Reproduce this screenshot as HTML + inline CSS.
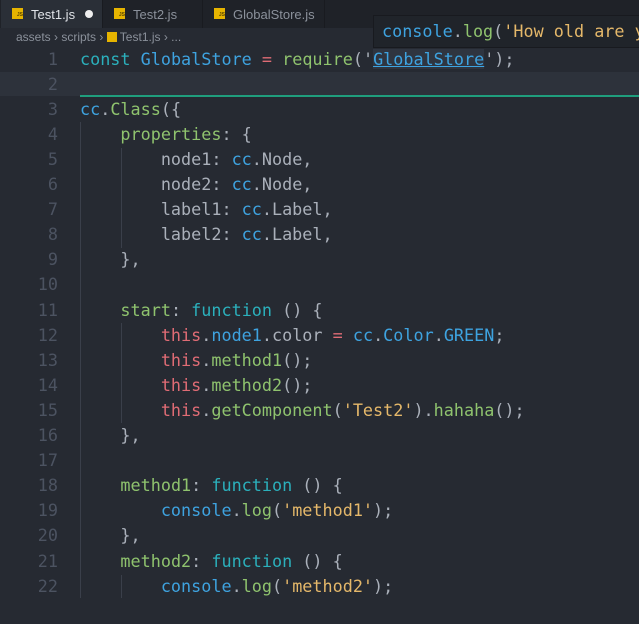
<!DOCTYPE html>
<html><head><style>
body{margin:0;width:639px;height:598px;overflow:hidden;background:#262a32;font-family:"Liberation Sans",sans-serif;position:relative}
.tabs{position:absolute;top:0;left:0;width:639px;height:28px;background:#1f2228}
.tab{position:absolute;top:0;height:28px;color:#8b919b;font-size:13px;line-height:29px}
.tab .ic{position:absolute;left:11px;top:8px;width:11px;height:11px;background:#e6b400;color:#5a4500;font-size:5px;line-height:14px;text-align:right;font-weight:bold}
.tab span.t{position:absolute;left:30px}
.bc{position:absolute;top:28px;left:16px;height:18px;line-height:19px;color:#8b919b;font-size:12px}
.code{position:absolute;top:46.5px;left:0;font-family:"DejaVu Sans Mono","Liberation Mono",monospace;font-size:16.8px;line-height:25.1px;color:#aab0ba;white-space:pre}
.ln{position:absolute;left:0;width:58px;text-align:right;color:#4c5361}
.tx{position:absolute;left:80px}
.k{color:#2bb0bc}.b{color:#3ea3e0}.r{color:#e06c75}.g{color:#8fc36e}.s{color:#e5b86a}
.guide{position:absolute;width:1px;background:#3a3f4a}
</style></head><body>
<div class="tabs">
<div class="tab" style="left:1px;width:101px;background:#2a2f37;color:#e0e3e8"><div class="ic">JS</div><span class="t">Test1.js</span><span style="position:absolute;left:84px;top:10px;width:8px;height:8px;border-radius:50%;background:#eee"></span></div>
<div class="tab" style="left:102px;width:100px;border-left:1px solid #191b20"><div class="ic">JS</div><span class="t">Test2.js</span></div>
<div class="tab" style="left:202px;width:121px;border-left:1px solid #191b20;border-right:1px solid #191b20"><div class="ic">JS</div><span class="t">GlobalStore.js</span></div>
</div>
<div class="bc">assets › scripts › <span style="display:inline-block;width:10px;height:10px;background:#e6b400;vertical-align:-1px"></span> Test1.js › ...</div>
<div style="position:absolute;top:72px;left:0;width:639px;height:24px;background:#2d323b"></div>
<div style="position:absolute;top:95px;left:80px;width:559px;height:2px;background:#1f9e7d"></div>
<div class="guide" style="left:80px;top:122px;height:476px"></div>
<div class="guide" style="left:121px;top:148px;height:100px"></div>
<div class="guide" style="left:121px;top:323px;height:100px"></div>
<div class="guide" style="left:121px;top:575px;height:23px"></div>
<div class="code">
<div class="ln" style="top:0">1</div><div class="tx" style="top:0"><span class="k">const</span> <span class="b">GlobalStore</span> <span class="r">=</span> <span class="g">require</span>('<span class="b" style="text-decoration:underline;background:#2f3540">GlobalStore</span>');</div>
<div class="ln" style="top:25.1px">2</div>
<div class="ln" style="top:50.2px">3</div><div class="tx" style="top:50.2px"><span class="b">cc</span>.<span class="g">Class</span>({</div>
<div class="ln" style="top:75.3px">4</div><div class="tx" style="top:75.3px">    <span class="g">properties</span>: {</div>
<div class="ln" style="top:100.4px">5</div><div class="tx" style="top:100.4px">        node1: <span class="b">cc</span>.Node,</div>
<div class="ln" style="top:125.5px">6</div><div class="tx" style="top:125.5px">        node2: <span class="b">cc</span>.Node,</div>
<div class="ln" style="top:150.6px">7</div><div class="tx" style="top:150.6px">        label1: <span class="b">cc</span>.Label,</div>
<div class="ln" style="top:175.7px">8</div><div class="tx" style="top:175.7px">        label2: <span class="b">cc</span>.Label,</div>
<div class="ln" style="top:200.8px">9</div><div class="tx" style="top:200.8px">    },</div>
<div class="ln" style="top:225.9px">10</div>
<div class="ln" style="top:251px">11</div><div class="tx" style="top:251px">    <span class="g">start</span>: <span class="k">function</span> () {</div>
<div class="ln" style="top:276.1px">12</div><div class="tx" style="top:276.1px">        <span class="r">this</span>.<span class="b">node1</span>.color <span class="r">=</span> <span class="b">cc</span>.<span class="b">Color</span>.<span class="b">GREEN</span>;</div>
<div class="ln" style="top:301.2px">13</div><div class="tx" style="top:301.2px">        <span class="r">this</span>.<span class="g">method1</span>();</div>
<div class="ln" style="top:326.3px">14</div><div class="tx" style="top:326.3px">        <span class="r">this</span>.<span class="g">method2</span>();</div>
<div class="ln" style="top:351.4px">15</div><div class="tx" style="top:351.4px">        <span class="r">this</span>.<span class="g">getComponent</span>(<span class="s">'Test2'</span>).<span class="g">hahaha</span>();</div>
<div class="ln" style="top:376.5px">16</div><div class="tx" style="top:376.5px">    },</div>
<div class="ln" style="top:401.6px">17</div>
<div class="ln" style="top:426.7px">18</div><div class="tx" style="top:426.7px">    <span class="g">method1</span>: <span class="k">function</span> () {</div>
<div class="ln" style="top:451.8px">19</div><div class="tx" style="top:451.8px">        <span class="b">console</span>.<span class="g">log</span>(<span class="s">'method1'</span>);</div>
<div class="ln" style="top:476.9px">20</div><div class="tx" style="top:476.9px">    },</div>
<div class="ln" style="top:502px">21</div><div class="tx" style="top:502px">    <span class="g">method2</span>: <span class="k">function</span> () {</div>
<div class="ln" style="top:527.1px">22</div><div class="tx" style="top:527.1px">        <span class="b">console</span>.<span class="g">log</span>(<span class="s">'method2'</span>);</div>
</div>
<div style="position:absolute;left:373px;top:15px;width:270px;height:31px;background:#20242a;border:1px solid #181a1f;font-family:'DejaVu Sans Mono',monospace;font-size:16.8px;line-height:31px;color:#aab0ba;white-space:pre;overflow:hidden"><span style="margin-left:8px" class="b">console</span>.<span class="g">log</span>(<span class="s">'How old are y</span></div>
</body></html>
